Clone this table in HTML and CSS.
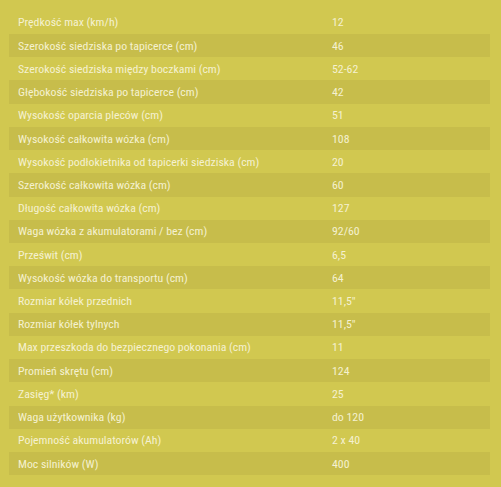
FILE: index.html
```html
<!DOCTYPE html>
<html lang="pl">
<head>
<meta charset="utf-8">
<link rel="stylesheet" href="styles.css">
</head>
<body>
<table class="spec">
<tbody>
<tr><td class="label">Prędkość max (km/h)</td><td class="val">12</td></tr>
<tr><td class="label">Szerokość siedziska po tapicerce (cm)</td><td class="val">46</td></tr>
<tr><td class="label">Szerokość siedziska między boczkami (cm)</td><td class="val">52-62</td></tr>
<tr><td class="label">Głębokość siedziska po tapicerce (cm)</td><td class="val">42</td></tr>
<tr><td class="label">Wysokość oparcia pleców (cm)</td><td class="val">51</td></tr>
<tr><td class="label">Wysokość całkowita wózka (cm)</td><td class="val">108</td></tr>
<tr><td class="label">Wysokość podłokietnika od tapicerki siedziska (cm)</td><td class="val">20</td></tr>
<tr><td class="label">Szerokość całkowita wózka (cm)</td><td class="val">60</td></tr>
<tr><td class="label">Długość całkowita wózka (cm)</td><td class="val">127</td></tr>
<tr><td class="label">Waga wózka z akumulatorami / bez (cm)</td><td class="val">92/60</td></tr>
<tr><td class="label">Prześwit (cm)</td><td class="val">6,5</td></tr>
<tr><td class="label">Wysokość wózka do transportu (cm)</td><td class="val">64</td></tr>
<tr><td class="label">Rozmiar kółek przednich</td><td class="val">11,5"</td></tr>
<tr><td class="label">Rozmiar kółek tylnych</td><td class="val">11,5"</td></tr>
<tr><td class="label">Max przeszkoda do bezpiecznego pokonania (cm)</td><td class="val">11</td></tr>
<tr><td class="label">Promień skrętu (cm)</td><td class="val">124</td></tr>
<tr><td class="label">Zasięg* (km)</td><td class="val">25</td></tr>
<tr><td class="label">Waga użytkownika (kg)</td><td class="val">do 120</td></tr>
<tr><td class="label">Pojemność akumulatorów (Ah)</td><td class="val">2 x 40</td></tr>
<tr><td class="label">Moc silników (W)</td><td class="val">400</td></tr>
</tbody>
</table>
</body>
</html>
```
FILE: styles.css
```css
html, body {
  margin: 0;
  padding: 0;
  background: #d1c850;
}
body {
  padding: 10.8px 11px 0 9px;
  font-family: "Liberation Sans Narrow", "Roboto Condensed", "Liberation Sans", sans-serif;
  font-size: 11.8px;
  color: #f5f1d0;
}
.spec {
  width: 481px;
  border-collapse: collapse;
  border-spacing: 0;
}
.spec tr {
  height: 23.22px;
}
.spec tr:nth-child(even) {
  background: #c7bd4b;
}
.spec td {
  padding: 0;
  vertical-align: middle;
  line-height: 14px;
}
.label {
  padding-left: 9px !important;
  width: 314px;
}
.val {
  width: auto;
}
```
